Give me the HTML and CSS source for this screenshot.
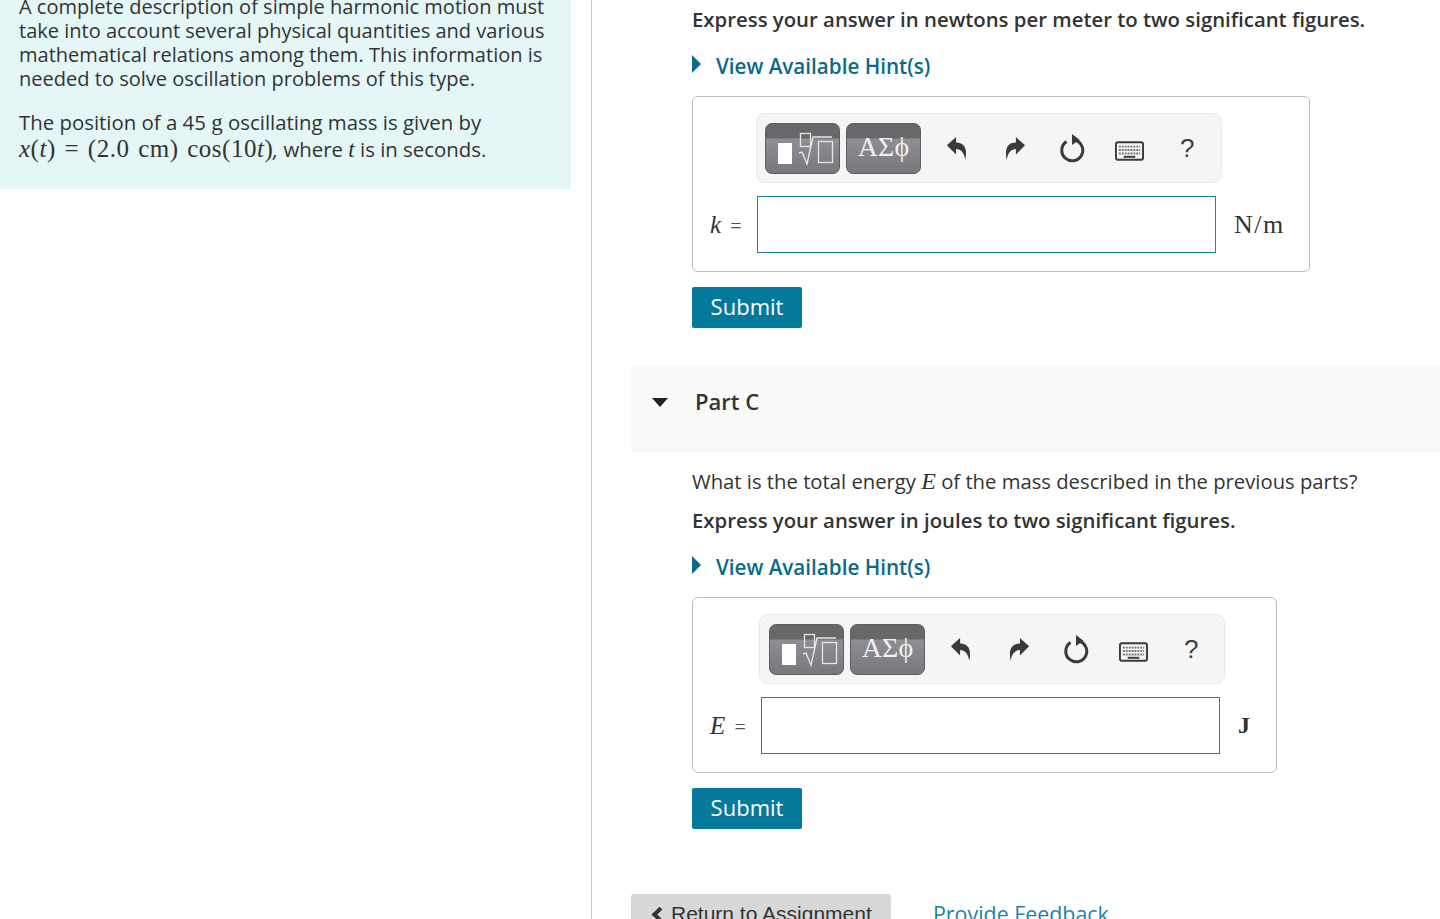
FILE: index.html
```html
<!DOCTYPE html>
<html lang="en">
<head>
<meta charset="utf-8">
<title>Part C</title>
<link rel="stylesheet" href="styles.css">
</head>
<body>
<svg class="defs" width="0" height="0">
  <symbol id="undo" viewBox="0 0 24 28"><path d="M1 10 L11 1 V7 C19 7 24 12 21 26 C20 18 16 14 11 14 V20 Z"/></symbol>
  <symbol id="redo" viewBox="0 0 24 28"><path d="M23 10 L13 1 V7 C5 7 0 12 3 26 C4 18 8 14 13 14 V20 Z"/></symbol>
  <symbol id="reload" viewBox="0 0 26 30"><path d="M6.500 8.500 A10.500 10.500 0 1 0 13 6.800" fill="none" stroke="#3a3a3a" stroke-width="3"/><path d="M12 1 L19.500 6.800 L12 12 Z"/></symbol>
  <symbol id="keys" viewBox="0 0 30 20">
    <rect x="1" y="1" width="28" height="18" rx="2" fill="#f5f5f5" stroke="#3a3a3a" stroke-width="2"/>
    <path d="M4 5.500 H26 M4 9 H26 M4 12.500 H26" stroke="#777" stroke-width="2" stroke-dasharray="2 1"/>
    <path d="M9 16 H21" stroke="#3a3a3a" stroke-width="2"/>
  </symbol>
  <symbol id="formula" viewBox="0 0 75 51">
    <rect x="13" y="20" width="14" height="21" fill="#fff"/>
    <rect x="35.500" y="10.500" width="10" height="13" fill="none" stroke="#e6e6e6" stroke-width="1.300"/>
    <path d="M34 30 L37 29 L42 41 L48 14 H67" fill="none" stroke="#e6e6e6" stroke-width="1.400"/>
    <rect x="53.500" y="18.500" width="14" height="21" fill="none" stroke="#e6e6e6" stroke-width="1.300"/>
  </symbol>
</svg>
<div class="page">
  <aside class="left">
    <div class="intro">
      <p class="intro-p">A complete description of simple harmonic motion must take into account several physical quantities and various mathematical relations among them. This information is needed to solve oscillation problems of this type.</p>
      <p class="intro-p second">The position of a 45 <span class="math">g</span> oscillating mass is given by<br><span class="formula"><i>x</i>(<i>t</i>) = (2.0 cm) cos(10<i>t</i>)</span><i class="comma">,</i> where <span class="math"><i>t</i></span> is in seconds.</p>
    </div>
  </aside>
  <main class="right">
    <div class="content">
      <p class="bold">Express your answer in newtons per meter to two significant figures.</p>
      <div class="hint"><span class="hint-arrow"></span>View Available Hint(s)</div>
      <div class="answer answer-k">
        <div class="toolbar">
          <span class="tbtn"><svg class="formula-ic"><use href="#formula"/></svg></span>
          <span class="tbtn greek">ΑΣϕ</span>
          <svg class="ic undo"><use href="#undo"/></svg>
          <svg class="ic redo"><use href="#redo"/></svg>
          <svg class="ic reload"><use href="#reload"/></svg>
          <svg class="ic keys"><use href="#keys"/></svg>
          <span class="help">?</span>
        </div>
        <div class="row">
          <span class="label"><i>k</i> <small>=</small></span>
          <span class="field"></span>
          <span class="unit">N/m</span>
        </div>
      </div>
      <button class="submit">Submit</button>
    </div>
    <div class="part">
      <span class="part-arrow"></span>
      <span class="part-title">Part C</span>
    </div>
    <div class="content">
      <p class="question">What is the total energy <span class="math big"><i>E</i></span> of the mass described in the previous parts?</p>
      <p class="bold tight">Express your answer in joules to two significant figures.</p>
      <div class="hint"><span class="hint-arrow"></span>View Available Hint(s)</div>
      <div class="answer answer-e">
        <div class="toolbar">
          <span class="tbtn"><svg class="formula-ic"><use href="#formula"/></svg></span>
          <span class="tbtn greek">ΑΣϕ</span>
          <svg class="ic undo"><use href="#undo"/></svg>
          <svg class="ic redo"><use href="#redo"/></svg>
          <svg class="ic reload"><use href="#reload"/></svg>
          <svg class="ic keys"><use href="#keys"/></svg>
          <span class="help">?</span>
        </div>
        <div class="row">
          <span class="label"><i>E</i> <small>=</small></span>
          <span class="field"></span>
          <span class="unit unit-bold">J</span>
        </div>
      </div>
      <button class="submit">Submit</button>
    </div>
    <footer class="footer">
      <span class="return"><span class="chev"></span>Return to Assignment</span>
      <span class="feedback">Provide Feedback</span>
    </footer>
  </main>
</div>
</body>
</html>
```
FILE: styles.css
```css
* { box-sizing: border-box; }
html, body { margin: 0; padding: 0; background: #fff; }
body { height: 919px; overflow: hidden; font-family: "Open Sans", "Noto Sans", sans-serif; color: #333; }
.defs { display: block; height: 0; }
.page { display: flex; height: 919px; overflow: hidden; }
p { margin: 0; }

.left { width: 592px; flex: none; border-right: 1px solid #c9c9c9; }
.intro { width: 571px; margin-top: -20px; padding: 15px 19px 26px; background: #e5f6f6; }
.intro-p { font-size: 20.05px; line-height: 24px; }
.second { margin-top: 18px; font-size: 20.4px; line-height: 27px; white-space: nowrap; }
.math, .formula { font-family: "Liberation Serif", serif; line-height: 1; }
.formula { font-size: 25px; letter-spacing: .5px; word-spacing: 2px; }
.math { font-size: 23px; }
.comma { font-size: 20px; }

.right { flex: 1; min-width: 0; padding-left: 39px; display: flex; flex-direction: column; }
.right > * { flex: none; }
.content { padding-left: 61px; }
.content:first-child { padding-top: 7px; }
.bold, .question { font-size: 20.35px; line-height: 24px; white-space: nowrap; }
.bold { font-weight: 600; }
.question { margin-top: 17px; font-size: 20.25px; }
.tight { margin-top: 15px; }
.big { font-size: 24px; }

.hint { display: flex; align-items: center; margin-top: 23px; height: 24px; font-size: 20.65px; font-weight: 600; color: #0b6a88; }
.hint-arrow { width: 0; height: 0; margin-right: 15px; margin-top: -4px; border-left: 9px solid #0b6a88; border-top: 9px solid transparent; border-bottom: 9px solid transparent; }

.answer { margin-top: 18px; border: 1px solid #bdbdbd; border-radius: 6px; height: 176px; padding-top: 16px; }
.answer-k { width: 618px; }
.answer-e { width: 585px; }
.toolbar { width: 466px; height: 70px; display: flex; align-items: center; background: #f5f5f5; border: 1px solid #e9e9e9; border-radius: 9px; padding-left: 8px; }
.answer-k .toolbar { margin-left: 63px; }
.answer-e .toolbar { margin-left: 66px; padding-left: 9px; }

.tbtn { width: 75px; height: 51px; flex: none; margin-right: 6px; border-radius: 7px; border: 1px solid #5e5e60; background: linear-gradient(#68686a 0 14px, #8e8e94 15px, #77777c 100%); display: block; }
.formula-ic { width: 75px; height: 51px; display: block; margin: -1px 0 0 -1px; }
.greek { color: #f0f0f0; font-family: "Liberation Serif", serif; font-size: 28px; line-height: 45px; text-align: center; }
.ic { flex: none; fill: #3a3a3a; display: block; }
.undo { width: 22px; height: 26px; margin-left: 19px; margin-top: 2px; }
.redo { width: 22px; height: 26px; margin-left: 36px; margin-top: 2px; }
.reload { width: 26px; height: 30px; margin-left: 34px; }
.keys { width: 29px; height: 20px; margin-left: 29px; margin-top: 5px; }
.help { margin-left: 36px; font-size: 26px; color: #3f3f3f; font-family: "Liberation Sans", sans-serif; }

.row { display: flex; align-items: center; margin-top: 13px; height: 57px; }
.label { width: 64px; padding-left: 17px; font-family: "Liberation Serif", serif; font-size: 25px; white-space: nowrap; }
.label small { font-size: 20px; color: #555; margin-left: 3px; }
.answer-e .label { width: 68px; }
.field { width: 459px; height: 57px; border: 1px solid #1b87a6; background: #fff; }
.unit { margin-left: 18px; font-family: "Liberation Serif", serif; font-size: 26px; letter-spacing: 1.5px; }
.unit-bold { font-weight: 700; font-size: 24px; }

.submit { display: block; margin-top: 15px; width: 110px; height: 41px; padding: 0 0 3px; border: 0; border-radius: 2px; background: #04799c; color: #fff; font-family: "Open Sans", sans-serif; font-size: 22px; font-weight: 500; }

.part { margin-top: 39px; height: 85px; padding: 21px 0 0 21px; background: #f9f9f9; display: flex; align-items: flex-start; }
.part-arrow { width: 0; height: 0; margin-top: 10px; border-top: 9px solid #222; border-left: 8px solid transparent; border-right: 8px solid transparent; }
.part-title { margin-left: 27px; font-size: 22px; line-height: 26px; font-weight: 600; color: #333; }

.footer { display: flex; align-items: flex-start; margin-top: 65px; }
.return { width: 260px; height: 40px; padding: 0 0 0 20px; background: #d8d8d8; border-radius: 3px; font-family: "Liberation Sans", sans-serif; font-size: 21px; line-height: 24px; color: #333; display: flex; align-items: center; white-space: nowrap; }
.chev { width: 11px; height: 11px; margin: 0 6px 0 3px; border-left: 4px solid #333; border-bottom: 4px solid #333; transform: rotate(45deg); }
.feedback { margin-left: 42px; padding-top: 8px; font-size: 21.4px; line-height: 24px; color: #1a85a8; }
```
